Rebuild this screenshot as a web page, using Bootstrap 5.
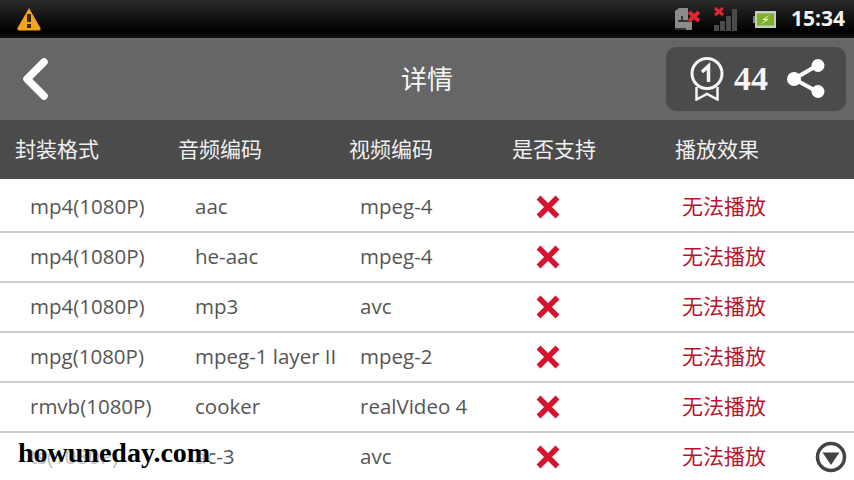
<!DOCTYPE html>
<html lang="zh">
  <head>
    <meta charset="UTF-8" />
    <meta name="viewport" content="width=device-width, initial-scale=1.0" />
    <title>详情</title>
    <link
      href="https://cdn.jsdelivr.net/npm/bootstrap@5.3.3/dist/css/bootstrap.min.css"
      rel="stylesheet"
    />
    <style>
      body {
        width: 854px;
        height: 480px;
        overflow: hidden;
        background: #fff;
        font-family: "Open Sans", "Noto Sans CJK SC", sans-serif;
      }
      .status-bar {
        height: 38px;
        padding: 0 9px 0 16px;
        background: linear-gradient(#2b2b2b, #000 82%, #151515);
      }
      .sim-icon {
        margin-right: 12px;
      }
      .signal-icon {
        margin-right: 15px;
      }
      .battery-icon {
        margin-right: 15px;
      }
      .status-time {
        font-family: "Open Sans", sans-serif;
        font-weight: 700;
        font-size: 21px;
        color: #f2f2f2;
      }
      .app-bar {
        height: 82px;
        background: #666;
      }
      .back-icon {
        margin-left: 18px;
      }
      .app-title {
        font-size: 26px;
        color: #f5f5f5;
      }
      .score-box {
        width: 180px;
        height: 64px;
        margin-right: 8px;
        padding-left: 24px;
        background: #4b4b4b;
        border-radius: 10px;
      }
      .score-num {
        margin: 0 18px 0 10px;
        font-family: "Liberation Serif", serif;
        font-weight: 700;
        font-size: 34px;
        line-height: 1;
        color: #f5f5f5;
      }
      .head-row,
      .data-row {
        display: grid;
        align-items: center;
      }
      .head-row {
        height: 59px;
        padding-left: 15px;
        grid-template-columns: 163px 171px 163px 163px 1fr;
        background: #4b4b4b;
        color: #f0f0f0;
        font-size: 21px;
      }
      .data-row {
        height: 50px;
        padding-left: 30px;
        grid-template-columns: 165px 165px 175px 147px 1fr;
        border-bottom: 2px solid #ccc;
        color: #555;
        font-size: 20.5px;
        white-space: nowrap;
      }
      .data-row:first-child {
        height: 54px;
        padding-top: 4px;
      }
      .data-row:last-child {
        border-bottom-color: transparent;
      }
      .cell-text {
        padding-bottom: 2px;
      }
      .fail-text {
        color: #b5142f;
        font-size: 21px;
      }
      .down-btn {
        right: 7px;
        bottom: 7px;
      }
      .site-mark {
        left: 18px;
        top: 439px;
        font-family: "Liberation Serif", serif;
        font-weight: 700;
        font-size: 28px;
        line-height: 1;
        color: #000;
        background: rgba(255, 255, 255, 0.6);
      }
    </style>
  </head>
  <body class="position-relative">
    <div class="status-bar d-flex align-items-center">
      <svg width="26" height="26" viewBox="0 0 26 26">
        <path d="M13 2 L24.500 22 Q25 24.500 22.500 24.500 L3.500 24.500 Q1 24.500 1.500 22 Z" fill="#f4a51c" />
        <rect x="11" y="8" width="4" height="8" fill="#3a2a0a" />
        <rect x="11" y="18" width="4" height="4" fill="#3a2a0a" />
      </svg>
      <div class="ms-auto d-flex align-items-center">
        <svg class="sim-icon" width="26" height="24" viewBox="0 0 26 24">
          <path d="M0 4 L4 1 H13 V23 H0 Z" fill="#8b8b8b" />
          <path d="M3 13 h3 v-4 h2 v4 h9 v10 h-17 v-2 h13 v-6 h-10 Z" fill="#333" />
          <rect x="11" y="15" width="6" height="8" fill="#8b8b8b" />
          <path d="M14 5 L24 14 M24 5 L14 14" stroke="#e2262f" stroke-width="4" />
        </svg>
        <svg class="signal-icon" width="25" height="24" viewBox="0 0 25 24">
          <path d="M1 18 h5 v6 h-5 Z M7 14 h5 v10 h-5 Z M13 9 h5 v15 h-5 Z M19 2 h5 v22 h-5 Z" fill="#4b4b4b" />
          <path d="M2 1 L10 8 M10 1 L2 8" stroke="#e2262f" stroke-width="3" />
        </svg>
        <svg class="battery-icon" width="23" height="17" viewBox="0 0 23 17">
          <rect x="2" y="0" width="21" height="17" fill="#c6ccc0" />
          <rect x="0" y="5" width="2" height="7" fill="#7d8a70" />
          <rect x="4" y="2.500" width="17" height="12" fill="#7fb02a" />
          <path d="M17 3.500 L9 9 H12.500 L7 14 L16 8 H12.500 Z" fill="#eef8c8" />
        </svg>
        <span class="status-time">15:34</span>
      </div>
    </div>

    <div class="app-bar d-flex align-items-center position-relative">
      <svg class="back-icon" width="34" height="48" viewBox="0 0 34 48">
        <path d="M26 7 L9 24 L26 41" fill="none" stroke="#fff" stroke-width="7.500" stroke-linecap="round" stroke-linejoin="round" />
      </svg>
      <div class="app-title position-absolute top-50 start-50 translate-middle">详情</div>
      <div class="score-box ms-auto d-flex align-items-center">
        <svg width="34" height="44" viewBox="0 0 34 44">
          <circle cx="17" cy="16.500" r="15" fill="none" stroke="#f5f5f5" stroke-width="3" />
          <path d="M12 15 L18.500 9 V25" fill="none" stroke="#f5f5f5" stroke-width="3.500" />
          <path d="M6.500 30 V42.500 L17 37 L27.500 42.500 V30" fill="none" stroke="#f5f5f5" stroke-width="2.500" />
        </svg>
        <span class="score-num">44</span>
        <svg width="40" height="44" viewBox="0 0 40 44">
          <path d="M32 8 L8 22 L32 35" fill="none" stroke="#fff" stroke-width="4" />
          <circle cx="32" cy="8.500" r="6.500" fill="#fff" />
          <circle cx="8" cy="22" r="7" fill="#fff" />
          <circle cx="32" cy="34.500" r="6.500" fill="#fff" />
        </svg>
      </div>
    </div>

    <div class="head-row">
      <div>封装格式</div>
      <div>音频编码</div>
      <div>视频编码</div>
      <div>是否支持</div>
      <div>播放效果</div>
    </div>

    <div id="rows"></div>

    <div class="site-mark position-absolute">howuneday.com</div>
    <svg class="down-btn position-absolute" width="32" height="32" viewBox="0 0 32 32">
      <circle cx="16" cy="16" r="13.500" fill="#fff" stroke="#444" stroke-width="3.500" />
      <path d="M7.500 11.500 H24.500 L16 24 Z" fill="#444" />
    </svg>

    <script>
      const data = [
        ["mp4(1080P)", "aac", "mpeg-4"],
        ["mp4(1080P)", "he-aac", "mpeg-4"],
        ["mp4(1080P)", "mp3", "avc"],
        ["mpg(1080P)", "mpeg-1 layer II", "mpeg-2"],
        ["rmvb(1080P)", "cooker", "realVideo 4"],
        ["ts(1080P)", "ac-3", "avc"],
      ];
      const cross = `<svg width="26" height="26" viewBox="0 0 26 26"><path d="M3.500 3.500 L22.500 22.500 M22.500 3.500 L3.500 22.500" stroke="#d5152f" stroke-width="5.500" /></svg>`;
      document.getElementById("rows").innerHTML = data
        .map(
          (r) => `
          <div class="data-row">
            <div class="cell-text">${r[0]}</div>
            <div class="cell-text">${r[1]}</div>
            <div class="cell-text">${r[2]}</div>
            <div class="d-flex">${cross}</div>
            <div class="fail-text">无法播放</div>
          </div>`
        )
        .join("");
    </script>
  </body>
</html>
